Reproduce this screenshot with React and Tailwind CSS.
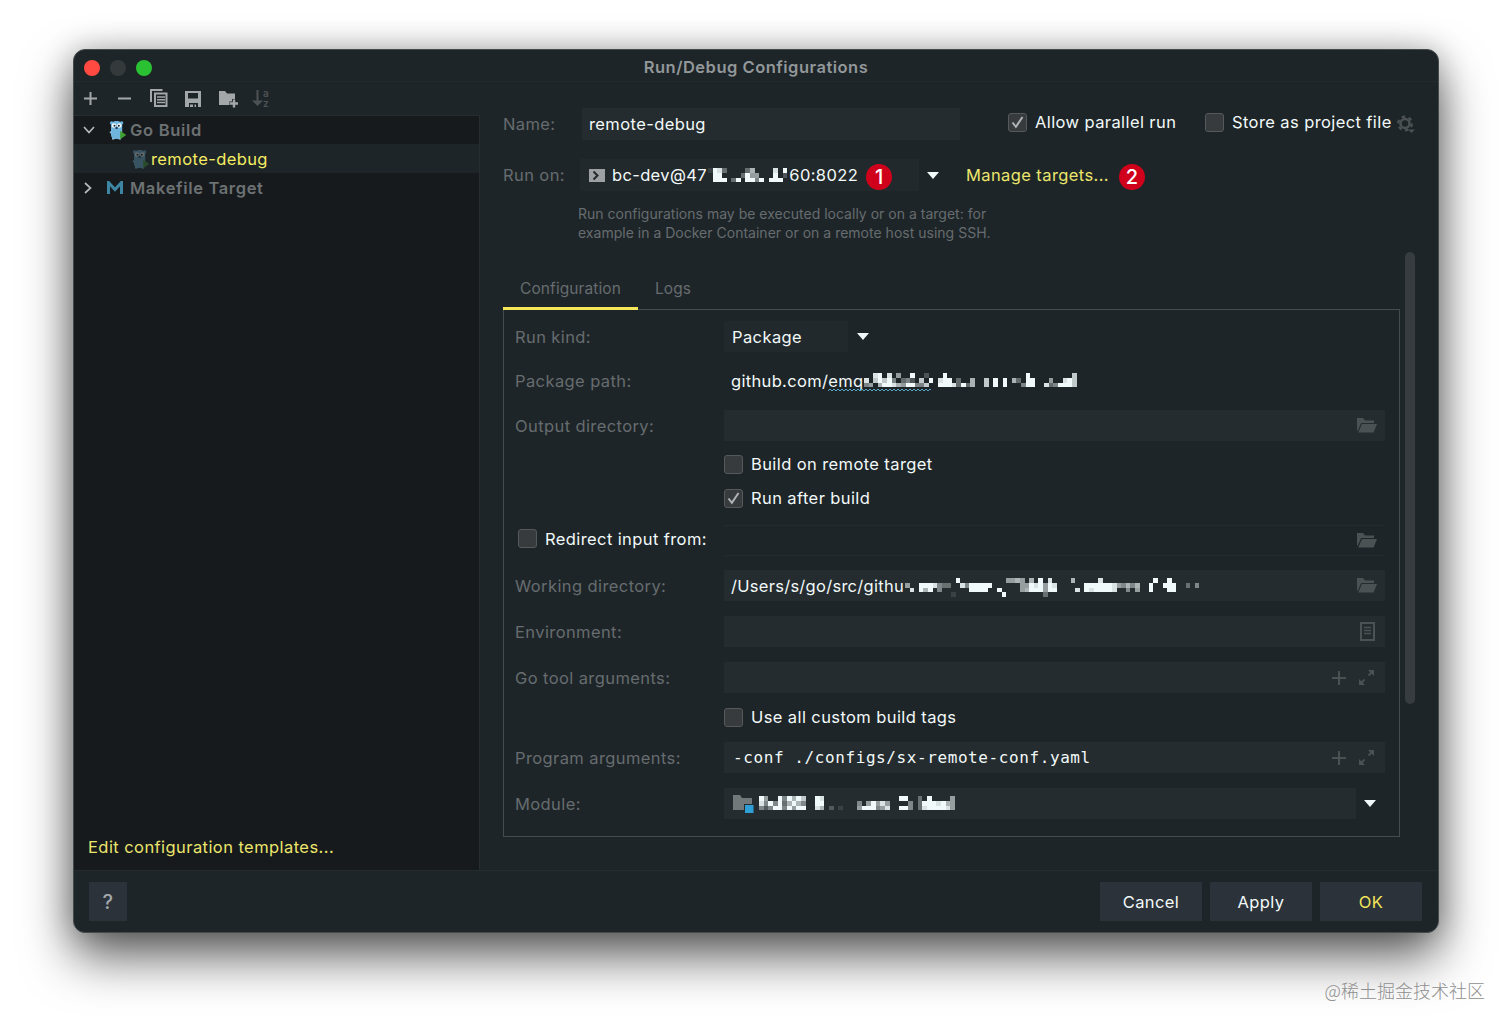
import clsx from "clsx";

// Each row is a line of cells: "." is empty, 1-9 is the brightness of the cell
const HOST_MOSAIC = [
  "1983....36....8.9",
  ".99....3955...9.2",
  ".999.39.9949.999.",
];
const PACKAGE_MOSAIC = [
  "..89.8.5..9..2...9.................9.........7",
  "8.79794.342.7.9.899.3..6..7.9.9.63.99...5..897",
  "45.69986599447..99983936..7.9.9...499..8349997",
];
const WORKDIR_MOSAIC = [
  "...........9..........5565.6.9.8....6.....8...........9..9.....",
  "5..9998433..8499999......55989598......999999854646..9..999..3.4",
  ".8.969.4......9999..9....56999599....8.9899998..4.5..9...99.....",
  "..........1..........9........3.",
];
const MODULE_MOSAIC = [
  "95..949697..98................99..3.9....5",
  "8494936964..99.......4.59585....4.39998965",
  "4249949599..86.2.1...5999458..994.38999985",
];

function Mosaic({ rows, cell = 4.6, className }) {
  const cellHeight = 4.8;
  const cols = Math.max(...rows.map((row) => row.length));
  return (
    <svg
      className={clsx("shrink-0", className)}
      width={cols * cell}
      height={rows.length * cellHeight}
      shapeRendering="crispEdges"
    >
      {rows.flatMap((row, y) =>
        [...row].map((level, x) =>
          level === "." ? null : (
            <rect
              key={`${x}-${y}`}
              x={x * cell}
              y={y * cellHeight}
              width={cell}
              height={cellHeight}
              fill="#f0fafa"
              opacity={Number(level) / 9}
            />
          )
        )
      )}
    </svg>
  );
}

function Gopher({ className, faded }) {
  return (
    <svg className={className} width="18" height="20" viewBox="0 0 18 20">
      <g opacity={faded ? 0.32 : 1}>
        <circle cx="2.6" cy="3" r="1.7" fill="#6fb5dd" />
        <circle cx="12.6" cy="3" r="1.7" fill="#6fb5dd" />
        <path d="M2 5.5C2 2.5 4.3 1 7.6 1s5.6 1.500 5.600 4.500V15c0 2.600-2 4-5.600 4S2 17.600 2 15z" fill="#6fb5dd" />
        <path d="M.8 11.500h2v1.800h-2zM3 18h2.500v1.500H3zM9.500 18H12v1.500H9.500z" fill="#8ec3e0" />
        <circle cx="5" cy="5.500" r="2.300" fill="#f4fafc" />
        <circle cx="10.300" cy="5.500" r="2.300" fill="#f4fafc" />
        <circle cx="5.500" cy="5.700" r="1" fill="#16222a" />
        <circle cx="9.800" cy="5.700" r="1" fill="#16222a" />
        <ellipse cx="7.600" cy="8" rx="1.300" ry=".9" fill="#22313a" />
        <path d="M11.200 10.700l6 4.300-6 4.300z" fill="#3f9f2f" />
      </g>
    </svg>
  );
}

function Caret({ className }) {
  return (
    <svg className={className} width="12" height="7" viewBox="0 0 12 7">
      <path d="M0 0h12L6 7z" fill="#f0fafa" />
    </svg>
  );
}

function FolderOpen() {
  return (
    <svg width="20" height="16" viewBox="0 0 20 16" fill="#4b5254">
      <path d="M0 0h6l2 2.500h9V5H4.200L.8 12.500H0z" />
      <path d="M5 6h15l-3.400 8.500H1.200z" />
    </svg>
  );
}

function ListIcon() {
  return (
    <svg className="mr-[2px]" width="15" height="19" viewBox="0 0 15 19" fill="none" stroke="#4b5254">
      <path d="M1 1h13v17H1z" strokeWidth="2" />
      <path d="M4 5.500h7M4 8.500h7M4 11.500h7" strokeWidth="1.300" />
    </svg>
  );
}

function PlusExpand() {
  return (
    <>
      <svg width="14" height="14" viewBox="0 0 14 14" stroke="#4b5254" strokeWidth="2">
        <path d="M7 0v14M0 7h14" />
      </svg>
      <svg className="ml-3 mr-[2px]" width="17" height="17" viewBox="0 0 17 17" fill="#4b5254" stroke="#4b5254">
        <path d="M10.500 6.500l3-3M6.500 10.500l-3 3" strokeWidth="1.800" />
        <path d="M10 1h6v6zM1 10v6h6z" stroke="none" />
      </svg>
    </>
  );
}

function Checkbox({ checked, label, className }) {
  return (
    <div className={clsx("flex items-center text-[#f2f9f9]", className)}>
      <span className="flex size-[19px] shrink-0 items-center justify-center rounded-[3px] border border-[#55595b] bg-[#383b3d]">
        {checked && (
          <svg width="13" height="13" viewBox="0 0 13 13" fill="none" stroke="#b0b3b4" strokeWidth="2">
            <path d="M1.500 6.500l3.400 4.300L11.500 1" />
          </svg>
        )}
      </span>
      <span className="ml-2 whitespace-nowrap">{label}</span>
    </div>
  );
}

function Badge({ children }) {
  return (
    <span className="flex size-[26px] shrink-0 items-center justify-center rounded-full bg-[#d0021b] text-xl font-medium tracking-normal text-white">
      {children}
    </span>
  );
}

function Row({ label, className, children }) {
  return (
    <div className={clsx("flex h-[31px] items-center", className)}>
      <span className="w-[209px] shrink-0 whitespace-nowrap">{label}</span>
      {children}
    </div>
  );
}

function Field({ icon, className, children }) {
  return (
    <div
      className={clsx(
        "flex h-[31px] w-[661px] items-center pl-[7px] pr-2 text-[#f2f9f9]",
        className ?? "bg-[#242c2f]"
      )}
    >
      {children}
      <span className="ml-auto flex items-center">{icon}</span>
    </div>
  );
}

function Toolbar() {
  return (
    <div className="flex h-[33px] items-center pl-[9px] text-[#a3a7a9]">
      <svg width="15" height="15" viewBox="0 0 15 15" stroke="currentColor" strokeWidth="2">
        <path d="M7.500 1v13M1 7.500h13" />
      </svg>
      <svg className="ml-[19px]" width="15" height="15" viewBox="0 0 15 15" stroke="currentColor" strokeWidth="2">
        <path d="M1 7.500h13" />
      </svg>
      <svg className="ml-[18px]" width="18" height="19" viewBox="0 0 18 19" fill="none" stroke="currentColor" strokeWidth="2">
        <path d="M1 13V1h11.500" />
        <path d="M5 4.500h11.500V17H5z" />
        <path d="M7 8h8M7 10.800h8M7 13.600h8" strokeWidth="1.500" />
      </svg>
      <svg className="ml-4" width="18" height="18" viewBox="0 0 18 18" fill="currentColor">
        <path fillRule="evenodd" d="M1 1h16v16h-3v-4H5v4H1zm3 2v5.500h10V3z" />
        <path d="M6 14.500h3V17H6zM10.500 14.500H12V17h-1.500z" />
      </svg>
      <svg className="ml-[17px]" width="20" height="18" viewBox="0 0 20 18" fill="currentColor">
        <path d="M0 1h6l2 2.500h8V9h-3v2.500h-2.500V15H0z" />
        <path d="M13.800 9.500h2.400v2.800H19v2.400h-2.800v2.800h-2.400v-2.800H11v-2.400h2.800z" />
      </svg>
      <div className="ml-[13px] flex items-center text-[#4d5254]">
        <svg width="11" height="17" viewBox="0 0 11 17" fill="currentColor">
          <path d="M4.500 0h2v10.500H11L5.500 16 0 10.500h4.500z" />
        </svg>
        <span className="-mt-[2px] flex flex-col text-[10px] font-semibold leading-[10px] tracking-normal">
          <span>a</span>
          <span>z</span>
        </span>
      </div>
    </div>
  );
}

function Sidebar() {
  return (
    <div className="flex w-[406px] shrink-0 flex-col">
      <Toolbar />
      <div className="flex flex-1 flex-col border-r border-t border-[#262d30] bg-[#171a1d] font-semibold text-[#6c7173]">
        <div className="-mt-px flex h-[29px] items-center pl-[9px]">
          <svg width="12" height="8" viewBox="0 0 12 8" fill="none" stroke="#b4b8ba" strokeWidth="1.700">
            <path d="M1 1l5 5.500L11 1" />
          </svg>
          <Gopher className="ml-[14px]" />
          <span className="ml-[3px] tracking-[0.700px]">Go Build</span>
        </div>
        <div className="flex h-[29px] items-center bg-[#1e2528] pl-[58px] font-normal text-[#f3ec63]">
          <Gopher faded />
          <span className="ml-px tracking-[0.400px]">remote-debug</span>
        </div>
        <div className="flex h-[29px] items-center pl-[10px]">
          <svg width="8" height="12" viewBox="0 0 8 12" fill="none" stroke="#b4b8ba" strokeWidth="1.700">
            <path d="M1 1l5.500 5L1 11" />
          </svg>
          <svg className="ml-[15px]" width="16" height="13" viewBox="0 0 16 13" fill="none" stroke="#3d86a3" strokeWidth="3">
            <path d="M1.500 13V1.500l6.500 7 6.500-7V13" />
          </svg>
          <span className="ml-[7px] tracking-[0.650px]">Makefile Target</span>
        </div>
        <div className="mb-[13px] mt-auto pl-[14px] font-normal tracking-[0.430px] text-[#ebe56c]">
          Edit configuration templates...
        </div>
      </div>
    </div>
  );
}

function ConfigPanel() {
  return (
    <div className="h-[528px] w-[897px] border border-[#454c4e] pl-[11px] pt-[11px]">
      <Row label="Run kind:">
        <div className="flex h-[31px] w-[124px] items-center bg-[#22292c] pl-2 text-[#f2f9f9]">Package</div>
        <Caret className="ml-[9px]" />
      </Row>
      <Row label="Package path:" className="mt-[13px]">
        <Field className="bg-transparent">
          <div className="relative flex items-center">
            <span className="tracking-[0.330px]">github.com/emq</span>
            <Mosaic rows={PACKAGE_MOSAIC} cell={4.62} className="ml-px" />
            {/* spell checker wave under the misspelled part */}
            <svg className="absolute left-[97px] top-[17px]" width="103" height="4">
              <defs>
                <pattern id="wave" width="4" height="4" patternUnits="userSpaceOnUse">
                  <path d="M0 3l2-2 2 2" fill="none" stroke="#5aa7c8" />
                </pattern>
              </defs>
              <rect width="103" height="4" fill="url(#wave)" />
            </svg>
          </div>
        </Field>
      </Row>
      <Row label="Output directory:" className="mt-[14px]">
        <Field icon={<FolderOpen />} />
      </Row>
      <Checkbox label="Build on remote target" className="ml-[209px] mt-[13px] h-5" />
      <Checkbox checked label="Run after build" className="ml-[209px] mt-[14px] h-5" />
      <div className="mt-[17px] flex h-[31px] items-center">
        <Checkbox label="Redirect input from:" className="-mt-1 w-[206px] shrink-0 pl-[3px]" />
        <Field icon={<FolderOpen />} className="ml-[3px] border-y border-[#242b2e]" />
      </div>
      <Row label="Working directory:" className="mt-[14px]">
        <Field icon={<FolderOpen />}>
          <span className="tracking-[0.280px]">/Users/s/go/src/githu</span>
          <Mosaic rows={WORKDIR_MOSAIC} className="ml-px mt-1" />
        </Field>
      </Row>
      <Row label="Environment:" className="mt-[15px]">
        <Field icon={<ListIcon />} />
      </Row>
      <Row label="Go tool arguments:" className="mt-[15px]">
        <Field icon={<PlusExpand />} />
      </Row>
      <Checkbox label="Use all custom build tags" className="ml-[209px] mt-[14px] h-5" />
      <Row label="Program arguments:" className="mt-[15px]">
        <Field icon={<PlusExpand />}>
          <span className="whitespace-pre pl-[2px] font-['DejaVu_Sans_Mono',monospace] text-base tracking-[0.590px]">
            -conf ./configs/sx-remote-conf.yaml
          </span>
        </Field>
      </Row>
      <Row label="Module:" className="mt-[15px]">
        <div className="flex h-[31px] w-[632px] items-center bg-[#242c2f] pl-[9px]">
          <svg width="21" height="19" viewBox="0 0 21 19">
            <path d="M0 1h7l2 3h10v6h-8v6H0z" fill="#71797b" />
            <path d="M12 11h8.500v8H12z" fill="#2f9fd8" />
          </svg>
          <Mosaic rows={MODULE_MOSAIC} cell={4.67} className="ml-[5px]" />
        </div>
        <Caret className="ml-2" />
      </Row>
    </div>
  );
}

function Editor() {
  return (
    <div className="flex flex-1 flex-col pl-[23px] pt-[26px] text-[#666c6f]">
      <div className="flex h-8 items-center">
        <span className="w-[79px] shrink-0">Name:</span>
        <div className="flex h-8 w-[378px] items-center bg-[#242c2f] pl-[7px] text-[#f2f9f9]">remote-debug</div>
        <Checkbox checked label="Allow parallel run" className="-mt-1 ml-12 w-[197px]" />
        <Checkbox label="Store as project file" className="-mt-1" />
        <svg className="ml-[5px] shrink-0" width="19" height="19" viewBox="0 0 19 19" fill="none" stroke="#4b5052">
          <circle cx="8" cy="8.500" r="4.500" strokeWidth="2.600" />
          <circle cx="8" cy="8.500" r="6.800" strokeWidth="2.400" strokeDasharray="3.560 3.560" />
          <path d="M11 14.500h7l-3.500 3.500z" fill="#4b5052" stroke="none" />
        </svg>
      </div>
      <div className="mt-[19px] flex h-8 items-center">
        <span className="w-[77px] shrink-0">Run on:</span>
        <div className="flex h-8 w-[339px] items-center bg-[#22292c] pl-[9px] text-[#f2f9f9]">
          <svg className="shrink-0" width="16" height="13" viewBox="0 0 16 13">
            <path d="M0 0h16v13H0z" fill="#9da1a3" />
            <path d="M4.500 2.500l4 4-4 4" fill="none" stroke="#24292c" strokeWidth="2" />
          </svg>
          <span className="ml-[7px] tracking-[0.350px]">bc-dev@47</span>
          <Mosaic rows={HOST_MOSAIC} cell={4.67} className="ml-px" />
          <span className="ml-[2px] mr-2">60:8022</span>
          <span className="mt-1">
            <Badge>1</Badge>
          </span>
        </div>
        <Caret className="ml-2" />
        <span className="ml-[27px] mr-[10px] tracking-[0.400px] text-[#ebe56c]">Manage targets...</span>
        <span className="mt-[3px]">
          <Badge>2</Badge>
        </span>
      </div>
      <div className="ml-[75px] mt-[14px] text-sm leading-[18.500px] tracking-[0.010px]">
        Run configurations may be executed locally or on a target: for
        <br />
        example in a Docker Container or on a remote host using SSH.
      </div>
      <div className="mt-[10px] flex h-[585px]">
        <div className="flex flex-col pt-[18px]">
          <div className="flex h-[39px]">
            <div className="relative z-10 -mb-px flex h-10 w-[135px] items-center justify-center border-b-[3px] border-[#f3e65a] text-[15.500px] tracking-[0.080px]">
              Configuration
            </div>
            <div className="flex h-[37px] items-center pl-[17px] text-[15.500px] tracking-[0.080px]">Logs</div>
          </div>
          <ConfigPanel />
        </div>
        <div className="ml-[5px] h-[452px] w-[10px] rounded-full bg-[#363c3f]" />
      </div>
    </div>
  );
}

export default function App() {
  return (
    <div className="flex h-[1029px] w-[1512px] flex-col overflow-hidden bg-white pl-[73px] pt-[49px] font-[Inter,sans-serif] text-[16.500px] leading-5 tracking-[0.400px]">
      <div className="flex h-[884px] w-[1366px] shrink-0 flex-col overflow-hidden rounded-xl border border-[#454b4d] bg-[#1e2528] shadow-[0_24px_50px_rgba(0,0,0,0.62),0_0_30px_rgba(0,0,0,0.24)]">
        <div className="flex h-8 shrink-0 items-center border-b border-[#232a2d] pl-[10px]">
          <span className="mt-[5px] size-4 rounded-full bg-[#ff4a42]" />
          <span className="ml-[10px] mt-[5px] size-4 rounded-full bg-[#34393c]" />
          <span className="ml-[10px] mt-[5px] size-4 rounded-full bg-[#2ac232]" />
          <span className="mr-[78px] mt-[3px] flex-1 text-center font-semibold tracking-[0.500px] text-[#92979a]">
            Run/Debug Configurations
          </span>
        </div>
        <div className="flex min-h-0 flex-1">
          <Sidebar />
          <Editor />
        </div>
        <div className="flex h-[62px] shrink-0 items-center gap-2 border-t border-[#252c2f] pl-[15px] pr-4 text-[#f2f9f9]">
          <button className="mr-auto h-[39px] w-[38px] bg-[#2c3239] text-xl font-medium text-[#a3a7ab]">?</button>
          <button className="h-[39px] w-[102px] bg-[#2c3239]">Cancel</button>
          <button className="h-[39px] w-[102px] bg-[#2c3239]">Apply</button>
          <button className="h-[39px] w-[102px] bg-[#2c3239] text-[#f3e65a]">OK</button>
        </div>
      </div>
      <div className="relative mr-[27px] mt-[47px] self-end font-['Noto_Sans_CJK_SC',sans-serif] text-[18px] font-light tracking-normal text-[#8f8f8f]">
        @稀土掘金技术社区
      </div>
    </div>
  );
}
